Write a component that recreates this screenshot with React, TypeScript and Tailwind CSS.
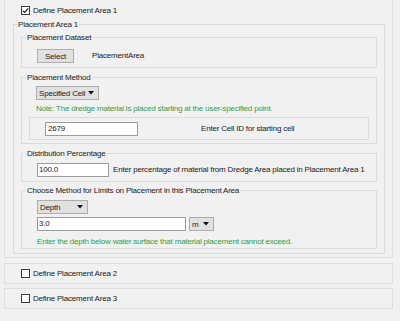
import React from "react";

function Group({ title, className, titleLeft, children }: { title?: string; className?: string; titleLeft?: string; children?: React.ReactNode }) {
    return (
        <div className={"relative border border-[#dbdbdb] " + (className || "")}>
            {title && (
                <span className={"absolute top-[-6px] bg-[#f1f1f1] px-[1px] leading-[11px] whitespace-nowrap " + (titleLeft || "left-[4px]")}>
                    {title}
                </span>
            )}
            {children}
        </div>
    );
}

function Caret() {
    return (
        <svg width="6" height="4" viewBox="0 0 6 4">
            <polygon points="0,0 6,0 3,3.5" fill="#111" />
        </svg>
    );
}

function Dropdown({ label, className }: { label: string; className?: string }) {
    return (
        <div className={"flex h-[14px] items-center justify-between border border-[#adadad] bg-[#e1e1e1] pl-[2px] pr-[4px] " + (className || "")}>
            <span>{label}</span>
            <Caret />
        </div>
    );
}

function CheckBox({ checked }: { checked?: boolean }) {
    return (
        <svg width="9" height="9" viewBox="0 0 9 9" className="shrink-0">
            <rect x="0.5" y="0.5" width="8" height="8" fill="#fbfbfb" stroke="#3a3a3a" strokeWidth="1" />
            {checked && <path d="M1.8 4.6 L3.6 6.4 L7.2 2.4" fill="none" stroke="#222" strokeWidth="1.1" />}
        </svg>
    );
}

function TextBox({ value, className }: { value: string; className?: string }) {
    return (
        <div className={"h-[14px] border border-[#9c9c9c] bg-white pl-[1px] leading-[12px] " + (className || "")}>{value}</div>
    );
}

export default function App() {
    return (
        <div className="h-[321px] w-[400px] overflow-hidden bg-[#f1f1f1] font-['Liberation_Sans',Arial,sans-serif] text-[8px] leading-[11px] tracking-[-0.2px] text-[#1a1a1a]">
            {/* area 1 panel */}
            <div className="ml-[4px] w-[389px] border border-t-0 border-[#dedede] pb-[3px] pl-[8px] pr-[7px] pt-[6px]">
                <div className="ml-[8px] flex h-[9px] items-center gap-[3px]">
                    <CheckBox checked />
                    <span>Define Placement Area 1</span>
                </div>

                <Group title="Placement Area 1" titleLeft="left-[3px]" className="mt-[9px] flex h-[230px] flex-col px-[7px] pb-[4px]">
                    <Group title="Placement Dataset" className="mt-[12px] flex h-[31px] items-start gap-[18px] pl-[15px] pt-[11px]">
                        <div className="flex h-[14px] w-[37px] items-center justify-center border border-[#adadad] bg-[#e1e1e1]">Select</div>
                        <span className="leading-[14px]">PlacementArea</span>
                    </Group>

                    <Group title="Placement Method" className="mt-[9px] flex h-[67px] flex-col pl-[14px] pt-[8px]">
                        <Dropdown label="Specified Cell" className="w-[63px]" />
                        <div className="mt-[3px] text-[#2f9e4a]">Note: The dredge material is placed starting at the user-specified point.</div>
                        <div className="-ml-[7px] mt-[3px] flex h-[23px] w-[340px] items-start border border-[#dbdbdb] pl-[15px] pt-[4px]">
                            <TextBox value="2679" className="w-[93px] pl-[2px]" />
                            <span className="ml-[63px] leading-[14px]">Enter Cell ID for starting cell</span>
                        </div>
                    </Group>

                    <Group title="Distribution Percentage" className="mt-[9px] flex h-[29px] items-start gap-[4px] pl-[15px] pt-[9px]">
                        <TextBox value="100.0" className="w-[72px]" />
                        <span className="leading-[14px]">Enter percentage of material from Dredge Area placed in Placement Area 1</span>
                    </Group>

                    <Group title="Choose Method for Limits on Placement in this Placement Area" className="mt-[8px] flex h-[59px] flex-col pl-[15px] pt-[9px]">
                        <Dropdown label="Depth" className="w-[51px] pl-[1px]" />
                        <div className="mt-[3px] flex gap-[3px]">
                            <TextBox value="3.0" className="w-[149px]" />
                            <Dropdown label="m" className="w-[25px] pr-[3px]" />
                        </div>
                        <div className="mt-[5px] text-[#2f9e4a]">Enter the depth below water surface that material placement cannot exceed.</div>
                    </Group>
                </Group>
            </div>

            {/* collapsed areas */}
            <div className="ml-[4px] mt-[5px] flex h-[21px] w-[389px] items-center gap-[3px] border border-[#dedede] pl-[16px]">
                <CheckBox />
                <span>Define Placement Area 2</span>
            </div>
            <div className="ml-[4px] mt-[4px] flex h-[21px] w-[389px] items-center gap-[3px] border border-[#dedede] pl-[16px]">
                <CheckBox />
                <span>Define Placement Area 3</span>
            </div>
        </div>
    );
}
